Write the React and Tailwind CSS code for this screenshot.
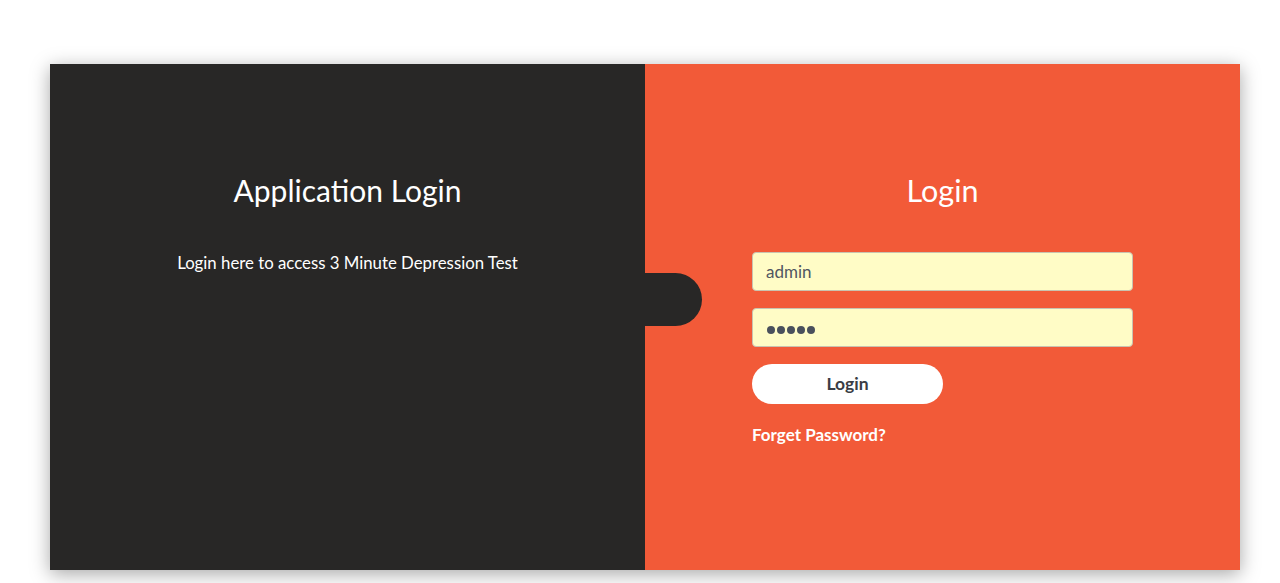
import React from "react";

export default function App() {
  return (
    <div className="w-[1280px] h-[583px] bg-white overflow-hidden" style={{ fontFamily: "Lato, 'Open Sans', sans-serif" }}>
      <div className="pt-[64px] pl-[50px]">
        <div className="relative flex w-[1190px] h-[506px] shadow-[0_4px_18px_rgba(0,0,0,0.35)]">
          <div className="w-[595px] h-full bg-[#282726] flex flex-col items-center pt-[108px] text-white">
            <h1 className="text-[30px] leading-[36px]">Application Login</h1>
            <p className="mt-[43px] text-[16.8px] leading-[24px]">Login here to access 3 Minute Depression Test</p>
          </div>
          <div className="w-[595px] h-full bg-[#f25a38] flex flex-col items-center pt-[108px]">
            <h2 className="text-[30.5px] leading-[36px] text-white">Login</h2>
            <div className="w-[381px] mt-[44px] flex flex-col">
              <div className="h-[39px] bg-[#fffcc6] border border-[#c9c3b0] rounded-[4px] flex items-center pl-[13px] text-[17px] text-[#505661]">admin</div>
              <div className="mt-[17px] h-[39px] bg-[#fffcc6] border border-[#c9c3b0] rounded-[4px] flex items-center pl-[14px] pt-[5px] gap-[2px]">
                {[0, 1, 2, 3, 4].map((i) => (
                  <span key={i} className="w-[8px] h-[8px] rounded-full bg-[#4a505c]" />
                ))}
              </div>
              <button className="mt-[17px] w-[191px] h-[40px] bg-white rounded-full text-[17.5px] font-bold text-[#3a3d44]">Login</button>
              <a className="mt-[19px] text-[17px] leading-[24px] font-bold text-white">Forget Password?</a>
            </div>
          </div>
          <div className="absolute left-[545px] top-[209px] w-[107px] h-[53px] bg-[#282726] rounded-r-full" />
        </div>
      </div>
    </div>
  );
}
